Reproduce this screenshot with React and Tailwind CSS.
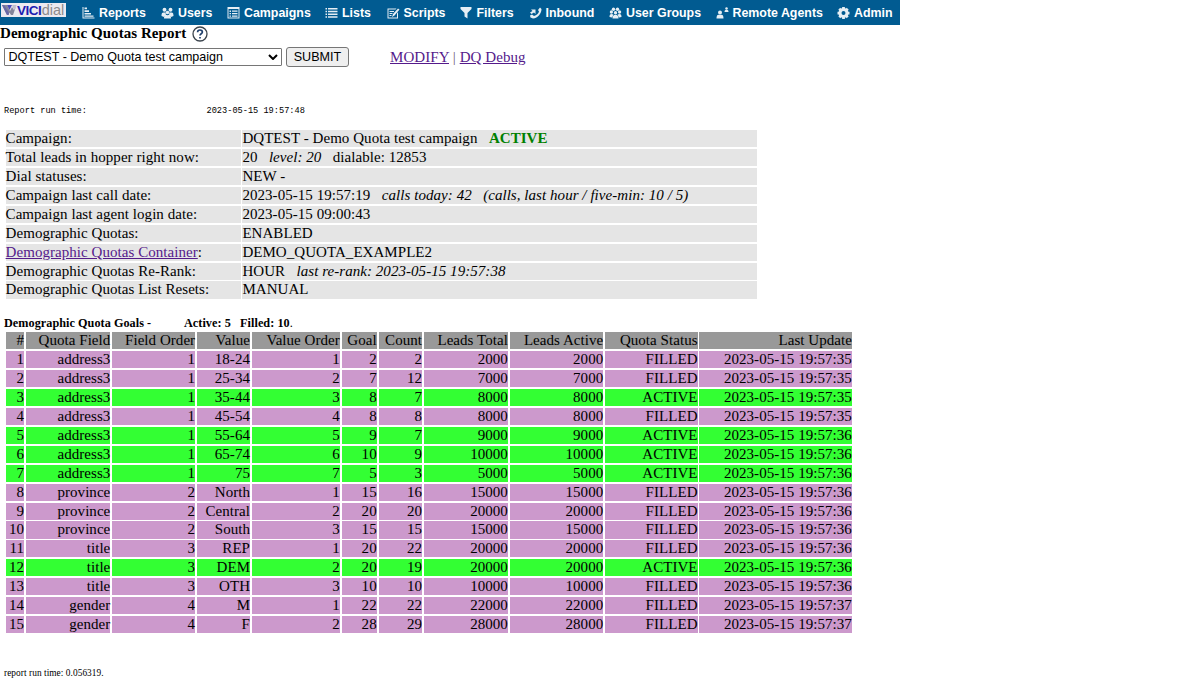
import React from "react";

const Svg = ({ children }) => (
  <svg viewBox="0 0 24 24" className="h-[12px] w-[13px] shrink-0 opacity-90" fill="currentColor">
    {children}
  </svg>
);

const icons = {
  reports: (
    <Svg>
      <path d="M0 0h2v21h22v2H0zM4 1h5v3.500H4zM4 6.500h9V10H4zM4 12h13v3H4zM4 17h18v2.500H4z" />
    </Svg>
  ),
  users: (
    <Svg>
      <circle cx="6" cy="5.500" r="3.900" />
      <circle cx="18" cy="5.500" r="3.900" />
      <path d="M0 18c0-5 1-7 4-7h4l1 4-4 5zM24 18c0-5-1-7-4-7h-4l-1 4 4 5z" />
      <circle cx="12" cy="11" r="3.600" />
      <path d="M5 23c0-5 1-7 4-7.500l3 1 3-1c3 .5 4 2.500 4 7.500z" />
    </Svg>
  ),
  campaigns: (
    <Svg>
      <path fillRule="evenodd" d="M0 0h24v23H0zM2 4v17h20V4zM4 7h3v3H4zM9 7h11v2.500H9zM4 12h3v2.500H4zM9 12h11v2.500H9zM4 17h3v2.500H4zM9 17h11v2.500H9z" />
    </Svg>
  ),
  lists: (
    <Svg>
      <path d="M0 2h3v3H0zM5 2h19v3H5zM0 7.500h3v3H0zM5 7.500h19v3H5zM0 13h3v3H0zM5 13h19v3H5zM0 18.500h3v3H0zM5 18.500h19v3H5z" />
    </Svg>
  ),
  scripts: (
    <Svg>
      <path d="M0 3h18l-2 2H2v16h17v-8l2-3v13H0z" />
      <path d="M21 3l3 2-10 12-5 3 2-6zM4 8h9v2H4zM4 12h6v2H4zM4 16h4v2H4z" />
    </Svg>
  ),
  filters: (
    <Svg>
      <path d="M0 0h22v4l-8 8v11l-6-4v-7L0 4z" />
    </Svg>
  ),
  inbound: (
    <Svg>
      <path d="M1 17l4-2 4 3c5-1 9-5 10-9l-2-3 4-5 3 3c0 9-7 18-17 19l-5-2z" />
      <path d="M3 5h9v9l-3-3-5 3-3-3 5-3z" />
    </Svg>
  ),
  groups: (
    <Svg>
      <circle cx="8" cy="4.500" r="3.400" />
      <circle cx="16" cy="4.500" r="3.400" />
      <circle cx="3.800" cy="10" r="3.300" />
      <circle cx="20.200" cy="10" r="3.300" />
      <circle cx="12" cy="11.500" r="3.300" />
      <path d="M0 20c0-4 1-6 4-6l4 1-3 6zM24 20c0-4-1-6-4-6l-4 1 3 6zM6 23c0-5 2-7.500 6-7.500s6 2.500 6 7.500z" />
    </Svg>
  ),
  remote: (
    <Svg>
      <circle cx="7" cy="11" r="4" />
      <path d="M0 23c0-5 1-7 4-7.500h6c3 .5 4 2.500 4 7.500z" />
      <circle cx="20" cy="3" r="2.500" />
      <path d="M16 10c0-3 1-4.500 4-4.500s4 1.500 4 4.500z" />
    </Svg>
  ),
  admin: (
    <Svg>
      <circle cx="12" cy="12" r="7" fill="none" stroke="currentColor" strokeWidth="6" />
      <g stroke="currentColor" strokeWidth="5.500">
        <path d="M12 0v4M12 20v4M0 12h4M20 12h4M3.500 3.500l3 3M17.500 17.500l3 3M20.500 3.500l-3 3M6.500 17.500l-3 3" />
      </g>
    </Svg>
  ),
};

const nav = [
  ["reports", "Reports", "w-[79px]"],
  ["users", "Users", "w-[66px]"],
  ["campaigns", "Campaigns", "w-[98px]"],
  ["lists", "Lists", "w-[61.500px]"],
  ["scripts", "Scripts", "w-[73px]"],
  ["filters", "Filters", "w-[69px]"],
  ["inbound", "Inbound", "w-[80.500px]"],
  ["groups", "User Groups", "w-[106.500px]"],
  ["remote", "Remote Agents", "w-[121.500px]"],
  ["admin", "Admin", "w-[62px]"],
];

const Logo = () => (
  <div className="mt-[3px] ml-[1px] flex h-[14px] w-[65px] shrink-0 items-center bg-[#eceaf0]">
    <svg viewBox="0 0 16 14" className="h-[14px] w-[16px] shrink-0">
      <path d="M1 2h5l3 6 2-4 2 3 2.500-5L12 12h-2L8.500 9.500 7.500 12H6z" fill="#85859a" />
      <path d="M6 2h5L8.500 7z" fill="#4a4ab8" />
      <path d="M1 2h2l5 8-.5 2H6z" fill="#6868a8" />
      <path d="M11 2h4.500L13 7z" fill="#c0c0cc" />
    </svg>
    <span className="text-[13.500px] leading-[15px] font-bold tracking-[-0.500px] text-[#1c1cb0]">VICI</span>
    <span className="pl-[0.500px] text-[14.500px] leading-[15px] text-[#8c8c8c]">dial</span>
  </div>
);

const Link = ({ children }) => (
  <a href="#" className="text-[#551a8b] underline">
    {children}
  </a>
);

const info = [
  ["Campaign:", <>DQTEST - Demo Quota test campaign &nbsp; <b className="text-[#008000]">ACTIVE</b></>],
  ["Total leads in hopper right now:", <>20 &nbsp; <i>level: 20</i> &nbsp; dialable: 12853</>],
  ["Dial statuses:", "NEW -"],
  ["Campaign last call date:", <>2023-05-15 19:57:19 &nbsp; <i>calls today: 42 &nbsp; (calls, last hour / five-min: 10 / 5)</i></>],
  ["Campaign last agent login date:", "2023-05-15 09:00:43"],
  ["Demographic Quotas:", "ENABLED"],
  [<><Link>Demographic Quotas Container</Link>:</>, "DEMO_QUOTA_EXAMPLE2"],
  ["Demographic Quotas Re-Rank:", <>HOUR &nbsp; <i>last re-rank: 2023-05-15 19:57:38</i></>],
  ["Demographic Quotas List Resets:", "MANUAL"],
];

const head = ["#", "Quota Field", "Field Order", "Value", "Value Order", "Goal", "Count", "Leads Total", "Leads Active", "Quota Status", "Last Update"];

const goals = [
  ["address3", 1, "18-24", 1, 2, 2, 2000, "FILLED", 35],
  ["address3", 1, "25-34", 2, 7, 12, 7000, "FILLED", 35],
  ["address3", 1, "35-44", 3, 8, 7, 8000, "ACTIVE", 35],
  ["address3", 1, "45-54", 4, 8, 8, 8000, "FILLED", 35],
  ["address3", 1, "55-64", 5, 9, 7, 9000, "ACTIVE", 36],
  ["address3", 1, "65-74", 6, 10, 9, 10000, "ACTIVE", 36],
  ["address3", 1, "75", 7, 5, 3, 5000, "ACTIVE", 36],
  ["province", 2, "North", 1, 15, 16, 15000, "FILLED", 36],
  ["province", 2, "Central", 2, 20, 20, 20000, "FILLED", 36],
  ["province", 2, "South", 3, 15, 15, 15000, "FILLED", 36],
  ["title", 3, "REP", 1, 20, 22, 20000, "FILLED", 36],
  ["title", 3, "DEM", 2, 20, 19, 20000, "ACTIVE", 36],
  ["title", 3, "OTH", 3, 10, 10, 10000, "FILLED", 36],
  ["gender", 4, "M", 1, 22, 22, 22000, "FILLED", 37],
  ["gender", 4, "F", 2, 28, 29, 28000, "FILLED", 37],
];

const Row = ({ cells, color }) => (
  <div className="grid h-[17.120px] grid-cols-[18.400px_84.500px_83px_53px_88px_35px_43.500px_84px_93.500px_92.500px_152.500px] gap-x-[1.850px] text-right">
    {cells.map((c, i) => (
      <div key={i} className={`h-[17.120px] leading-[17.200px] whitespace-nowrap ${color}`}>
        {c}
      </div>
    ))}
  </div>
);

export default function App() {
  return (
    <div className="h-[684px] w-[1200px] overflow-hidden bg-white font-['Liberation_Serif',serif] text-[15px] tracking-[0.050px] text-black">
      <nav className="flex h-[24.500px] w-[900px] items-start bg-[#015b91] font-['Liberation_Sans',sans-serif] tracking-normal">
        <Logo />
        <div className="ml-[16px] flex h-[26.500px] items-center">
          {nav.map(([icon, label, width]) => (
            <a key={icon} href="#" className={`flex shrink-0 items-center gap-[4px] text-[12.400px] font-bold whitespace-nowrap text-white ${width}`}>
              {icons[icon]}
              {label}
            </a>
          ))}
        </div>
      </nav>

      <div className="flex h-[18px] items-center gap-[6px] font-bold">
        <span className="whitespace-nowrap">Demographic Quotas Report</span>
        <svg viewBox="0 0 16 16" className="h-[16px] w-[16px]">
          <circle cx="8" cy="8" r="7" fill="#fff" stroke="#3a434c" strokeWidth="1.300" />
          <path d="M5.600 6.300C5.600 3.300 10.400 3.300 10.400 6.100C10.400 7.800 8 7.800 8 9.600M8 11v1.600" fill="none" stroke="#1f3f6c" strokeWidth="1.700" />
        </svg>
      </div>

      <div className="flex h-[29px] items-center pl-[4px] font-['Liberation_Sans',sans-serif]">
        <div className="flex h-[18px] w-[278px] items-center justify-between rounded-[1px] border border-[#767676] bg-white pr-[3px] pl-[3.500px] text-[12.550px] tracking-normal">
          <span>DQTEST - Demo Quota test campaign</span>
          <svg viewBox="0 0 10 6" className="h-[6px] w-[10px]">
            <path d="M1 1l4 4 4-4" fill="none" stroke="#000" strokeWidth="2" />
          </svg>
        </div>
        <button className="ml-[4px] h-[20px] w-[63px] rounded-[3px] border border-[#767676] bg-[#efefef] text-[12.600px] leading-[18px] tracking-normal">SUBMIT</button>
        <div className="ml-[41px] font-['Liberation_Serif',serif] leading-[20px] tracking-[0.060px] whitespace-nowrap">
          <Link>MODIFY</Link> <span className="text-[#6b5a78]">|</span> <Link>DQ Debug</Link>
        </div>
      </div>

      <div className="mt-[34px] flex h-[12px] items-center pl-[4px] font-['Liberation_Mono',monospace] text-[8.640px] tracking-normal whitespace-nowrap">
        <span className="w-[202.500px]">Report run time:</span>
        <span>2023-05-15 19:57:48</span>
      </div>

      <div className="mt-[12.700px] ml-[5.600px] flex flex-col gap-[1.800px]">
        {info.map(([label, value], i) => (
          <div key={i} className="grid h-[17.120px] grid-cols-[235px_515px] gap-x-[1.800px] leading-[17.200px] whitespace-nowrap">
            <div className="h-[17.120px] bg-[#e5e5e5]">{label}</div>
            <div className="h-[17.120px] bg-[#e5e5e5]">{value}</div>
          </div>
        ))}
      </div>

      <div className="mt-[17px] flex h-[15px] items-center pl-[4px] text-[12.200px] font-bold whitespace-pre">
        <span className="w-[180px]">Demographic Quota Goals -</span>
        <span>Active: 5 &nbsp; Filled: 10<span className="font-normal">.</span></span>
      </div>

      <div className="mt-[1.800px] ml-[5.600px] flex flex-col gap-[1.800px]">
        <Row cells={head} color="bg-[#999999]" />
        {goals.map(([field, order, value, vOrder, goal, count, leads, status, sec], i) => (
          <Row
            key={i}
            cells={[i + 1, field, order, value, vOrder, goal, count, leads, leads, status, `2023-05-15 19:57:${sec}`]}
            color={status === "ACTIVE" ? "bg-[#33ff33]" : "bg-[#cc99cc]"}
          />
        ))}
      </div>

      <div className="mt-[34px] pl-[4px] text-[9.350px] leading-[12px]">report run time: 0.056319.</div>
    </div>
  );
}
